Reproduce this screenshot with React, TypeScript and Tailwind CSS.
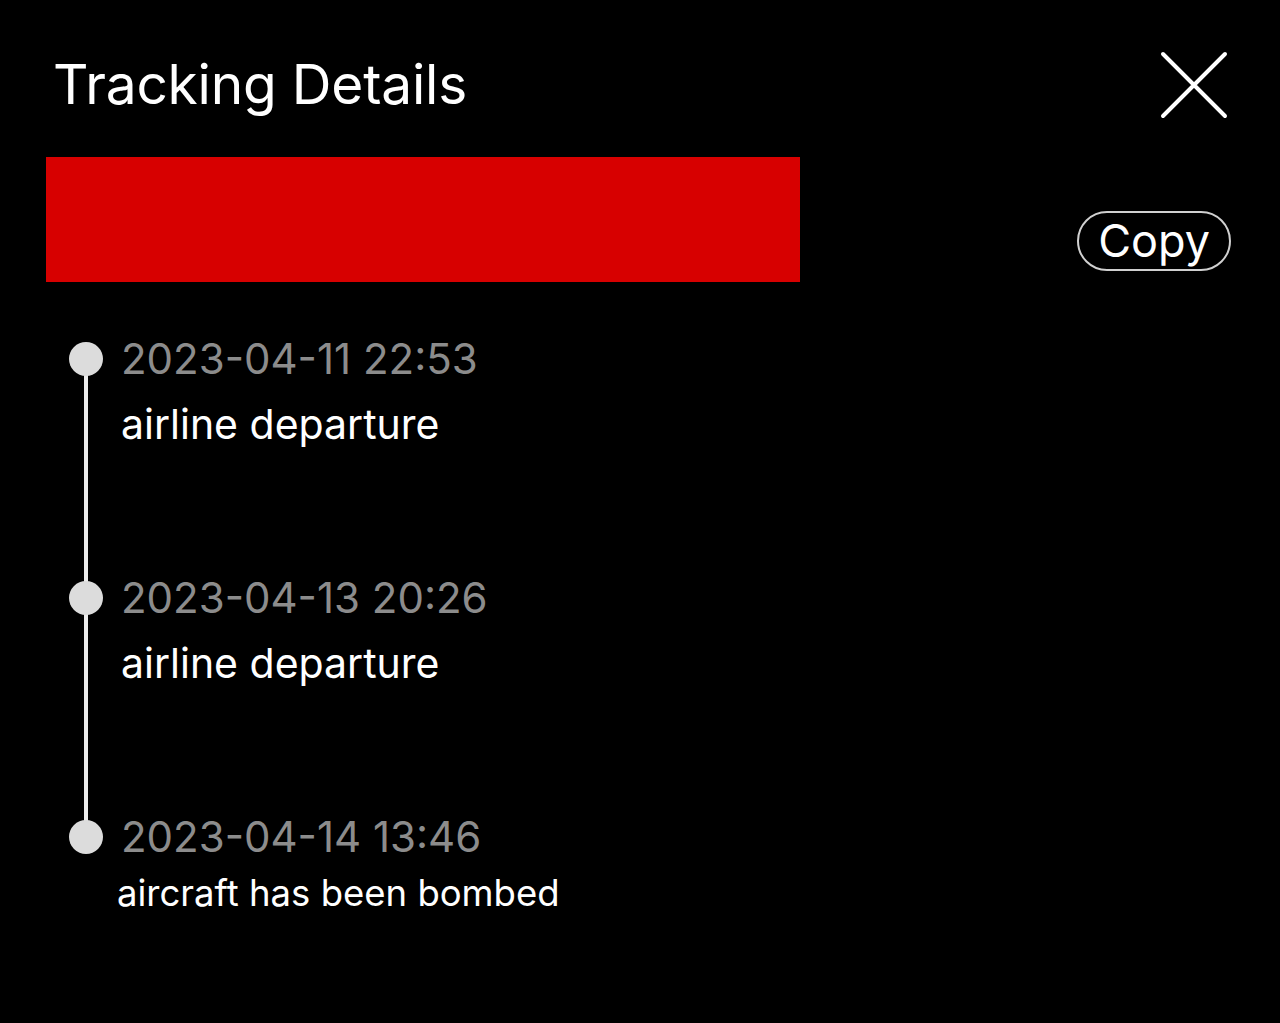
type Event = { time: string; label: string; small?: boolean };

const events: Event[] = [
  { time: "2023-04-11 22:53", label: "airline departure" },
  { time: "2023-04-13 20:26", label: "airline departure" },
  { time: "2023-04-14 13:46", label: "aircraft has been bombed", small: true },
];

export default function App() {
  return (
    <main
      className="min-h-screen w-full overflow-hidden bg-black text-white"
      style={{ fontFamily: "Inter, 'Noto Sans', sans-serif" }}
    >
      <div className="flex items-start justify-between pl-[53px] pr-[52px] pt-[50px]">
        <h1 className="text-[55px] leading-[68px] font-normal tracking-[-0.2px]">Tracking Details</h1>
        <button className="mt-[1px] text-white">
          <svg width="68" height="68" viewBox="0 0 68 68" fill="none">
            <path d="M3 3 L65 65 M65 3 L3 65" stroke="currentColor" strokeWidth="4" strokeLinecap="round" />
          </svg>
        </button>
      </div>

      <div className="mt-[38px] flex items-center justify-between pl-[46px] pr-[49px]">
        <div className="h-[125px] w-[754px] bg-[#d70000]" />
        <button className="mt-[42px] h-[60px] rounded-full border-2 border-[#d0d0d0] px-[19px] text-[45px] leading-none">
          Copy
        </button>
      </div>

      <div className="relative mt-[59px] pl-[69px]">
        <div className="absolute left-[84px] top-[10px] h-[480px] w-[4px] bg-[#ececec]" />
        {events.map((e, i) => (
          <div key={i} className={`relative flex items-start ${e.small ? "" : "h-[239px]"}`}>
            <div className="mt-[1px] h-[34px] w-[34px] shrink-0 rounded-full bg-[#dcdcdc]" />
            <div className="ml-[18px]">
              <div className="text-[42px] leading-[36px] text-[#8c8c8c]">{e.time}</div>
              {e.small ? (
                <div className="-ml-[4px] mt-[18px] text-[36.5px] leading-[40px]">{e.label}</div>
              ) : (
                <div className="mt-[25px] text-[41px] leading-[44px]">{e.label}</div>
              )}
            </div>
          </div>
        ))}
      </div>
    </main>
  );
}
